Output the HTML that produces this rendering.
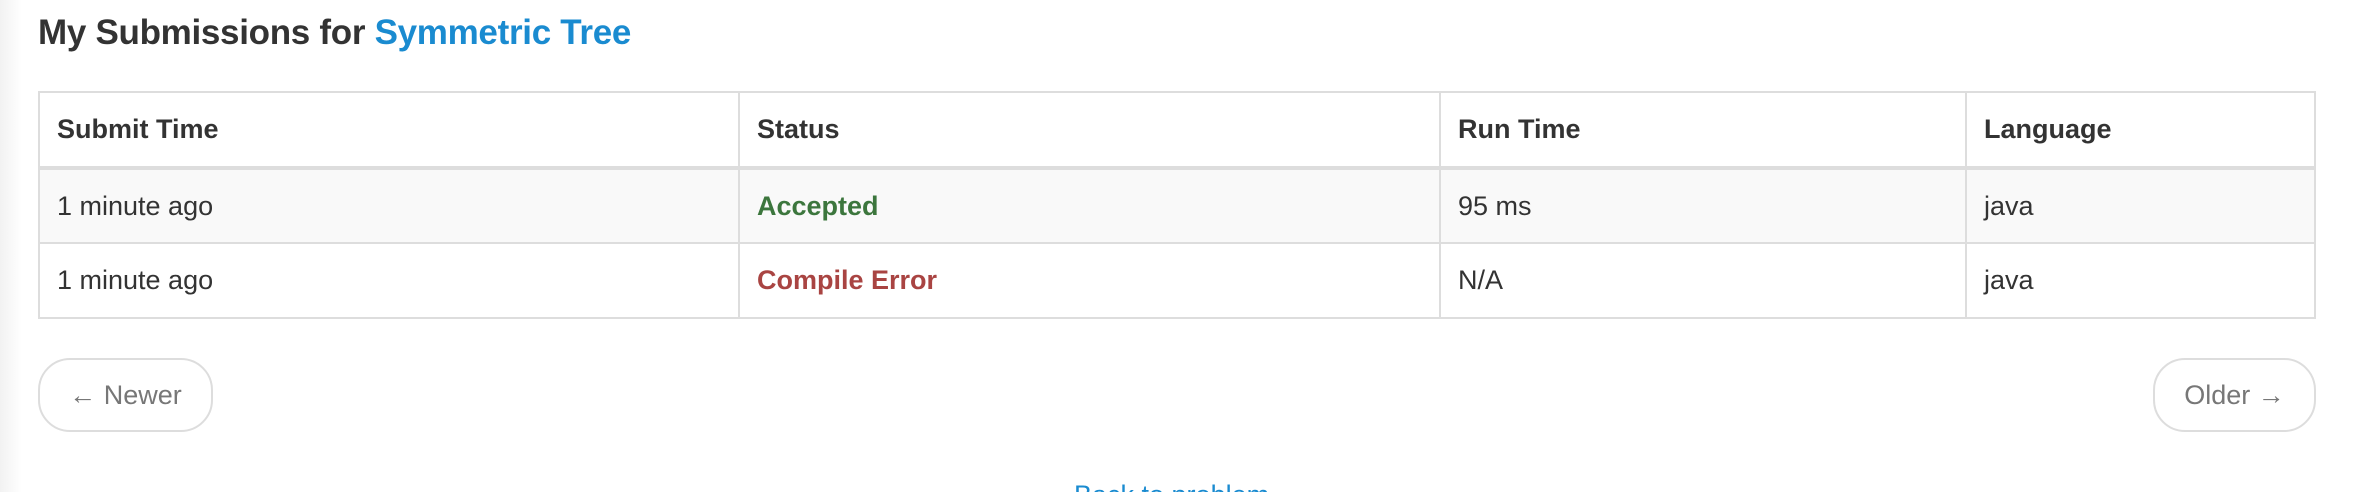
<!DOCTYPE html>
<html><head><meta charset="utf-8"><style>
*{margin:0;padding:0;box-sizing:border-box}
html,body{width:2368px;height:492px;overflow:hidden;background:#fff;font-family:"Liberation Sans",Arial,sans-serif;color:#333;position:relative}
.shade{position:absolute;left:0;top:0;width:22px;height:492px;background:linear-gradient(to right,#f2f2f2,#fff)}
h1{position:absolute;left:38px;top:13px;font-size:35px;font-weight:bold;color:#333;letter-spacing:-0.3px;white-space:nowrap}
h1 a{color:#1a8bd0;text-decoration:none}
table{position:absolute;left:38px;top:91px;width:2278px;border-collapse:collapse;font-size:27px}
td,th{border:2px solid #ddd;padding:0 17px;text-align:left;vertical-align:middle}
th{height:76px;font-weight:bold;border-bottom:4px solid #ddd}
td{height:75px}
tr.odd td{background:#f9f9f9}
.acc{color:#3c763d;font-weight:bold}
.err{color:#a94442;font-weight:bold}
.btn{position:absolute;top:358px;height:74px;border:2px solid #ddd;border-radius:32px;font-size:27px;color:#777;display:flex;align-items:center;justify-content:center;background:#fff}
.back{position:absolute;left:1074px;top:480px;font-size:27px;color:#1a8bd0;white-space:nowrap}
</style></head><body>
<div class="shade"></div>
<h1>My Submissions for <a>Symmetric Tree</a></h1>
<table>
<tr><th style="width:700px">Submit Time</th><th style="width:701px">Status</th><th style="width:526px">Run Time</th><th>Language</th></tr>
<tr class="odd"><td>1 minute ago</td><td class="acc">Accepted</td><td>95 ms</td><td>java</td></tr>
<tr><td>1 minute ago</td><td class="err">Compile Error</td><td>N/A</td><td>java</td></tr>
</table>
<div class="btn" style="left:38px;width:175px">← Newer</div>
<div class="btn" style="left:2153px;width:163px">Older →</div>
<div class="back">Back to problem</div>
</body></html>
